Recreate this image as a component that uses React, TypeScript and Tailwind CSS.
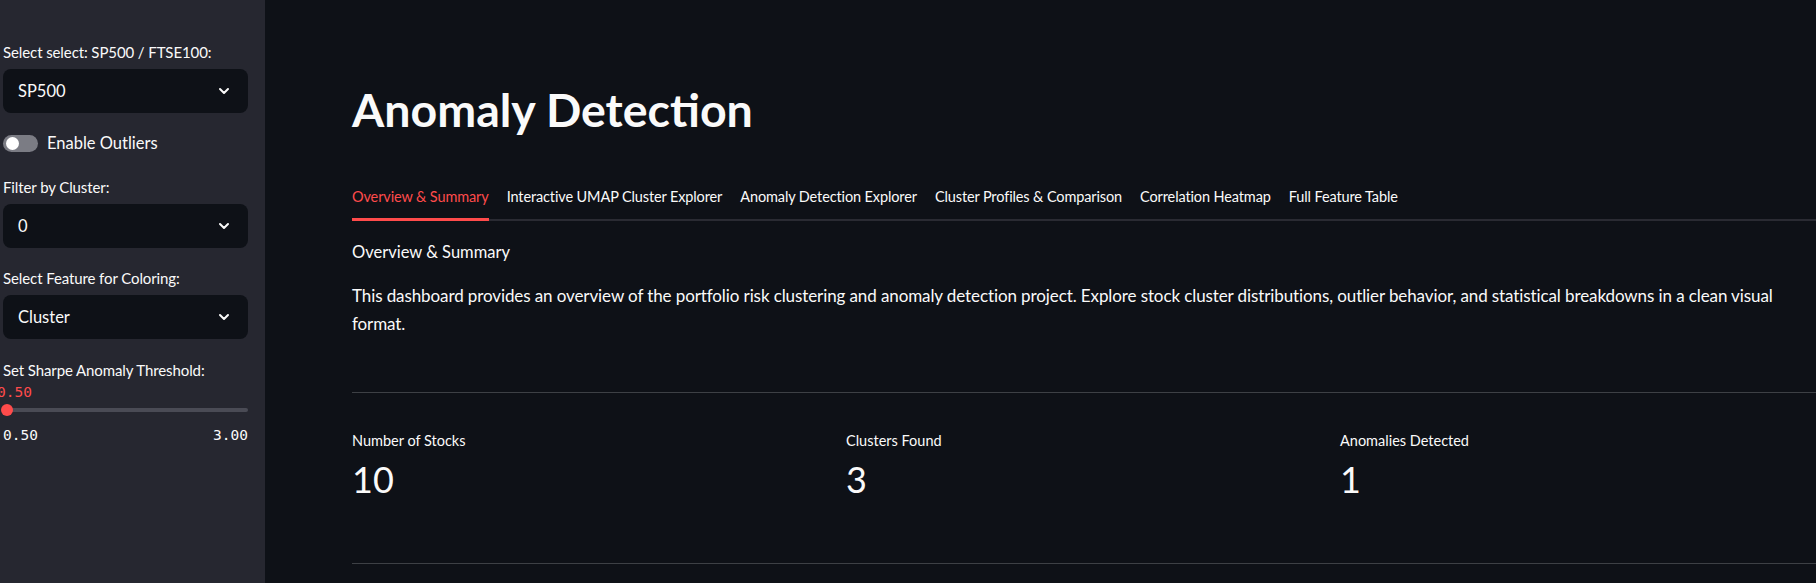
import { ChevronDown } from "lucide-react";

const tabs = [
  "Overview & Summary",
  "Interactive UMAP Cluster Explorer",
  "Anomaly Detection Explorer",
  "Cluster Profiles & Comparison",
  "Correlation Heatmap",
  "Full Feature Table",
];

const metrics = [
  { label: "Number of Stocks", value: "10" },
  { label: "Clusters Found", value: "3" },
  { label: "Anomalies Detected", value: "1" },
];

function SelectBox({ value }: { value: string }) {
  return (
    <div className="flex h-[44px] items-center justify-between rounded-[8px] bg-[#0e1117] pl-[15px] pr-[16px]">
      <span className="text-[16.5px] leading-[24px] text-[#fafafa]">{value}</span>
      <ChevronDown size={16} strokeWidth={3} className="text-[#fafafa]" />
    </div>
  );
}

function Label({ text, className }: { text: string; className?: string }) {
  return (
    <div
      className={
        "text-[15px] leading-[20px] tracking-[-0.1px] text-[#fafafa] " + (className ?? "")
      }
    >
      {text}
    </div>
  );
}

export default function App() {
  return (
    <div className="flex h-[583px] w-full overflow-hidden bg-[#0e1117] font-['Lato',sans-serif] text-[#fafafa]">
      <aside className="w-[265px] shrink-0 bg-[#262730]">
        <div className="w-[248px] pl-[3px]">
          <Label text="Select select: SP500 / FTSE100:" className="mt-[42px]" />
          <div className="mt-[7px]">
            <SelectBox value="SP500" />
          </div>

          <div className="mt-[18px] flex h-[24px] items-center gap-[9px]">
            <div className="flex h-[17px] w-[35px] items-center rounded-full bg-[#7b7c84] px-[3px]">
              <div className="h-[13px] w-[13px] rounded-full bg-white" />
            </div>
            <span className="text-[16.5px] leading-[24px]">Enable Outliers</span>
          </div>

          <Label text="Filter by Cluster:" className="mt-[22px]" />
          <div className="mt-[7px]">
            <SelectBox value="0" />
          </div>

          <Label text="Select Feature for Coloring:" className="mt-[20px]" />
          <div className="mt-[7px]">
            <SelectBox value="Cluster" />
          </div>

          <Label text="Set Sharpe Anomaly Threshold:" className="mt-[21px]" />
          <div className="mt-[3px] -ml-[6px] font-['DejaVu_Sans_Mono',monospace] text-[14.5px] leading-[18px] text-[#ff4b4b]">
            0.50
          </div>
          <div className="relative mt-[3px] flex h-[12px] items-center">
            <div className="h-[4px] w-full rounded-full bg-[#4a4b55]" />
            <div className="absolute -left-[2px] top-0 h-[12px] w-[12px] rounded-full bg-[#ff4b4b]" />
          </div>
          <div className="mt-[10px] flex justify-between font-['DejaVu_Sans_Mono',monospace] text-[14.5px] leading-[18px]">
            <span>0.50</span>
            <span>3.00</span>
          </div>
        </div>
      </aside>

      <main className="min-w-0 flex-1 overflow-hidden pl-[87px]">
        <div className="w-[1464px]">
          <h1 className="mt-[80px] text-[46.5px] font-bold leading-[58px]">Anomaly Detection</h1>

          <div className="mt-[49px] flex gap-[18px] border-b-2 border-[#2a2b33]">
            {tabs.map((tab, i) => (
              <div
                key={tab}
                className={
                  i === 0
                    ? "-mb-[2px] border-b-[3px] border-[#ff4b4b] pb-[11px] text-[14.5px] leading-[20px] tracking-[-0.12px] text-[#ff4b4b]"
                    : "-mb-[2px] border-b-[3px] border-transparent pb-[11px] text-[14.5px] leading-[20px] tracking-[-0.12px]"
                }
              >
                {tab}
              </div>
            ))}
          </div>

          <div className="mt-[19px] text-[16.5px] leading-[24px]">Overview &amp; Summary</div>
          <p className="mt-[18px] text-[17px] leading-[28px] tracking-[-0.1px]">
            This dashboard provides an overview of the portfolio risk clustering and anomaly detection
            project. Explore stock cluster distributions, outlier behavior, and statistical breakdowns
            in a clean visual format.
          </p>

          <hr className="mt-[54px] border-t border-[#3d4045]" />

          <div className="mt-[38px] grid grid-cols-3 gap-x-[18px]">
            {metrics.map((m) => (
              <div key={m.label}>
                <div className="text-[14.5px] leading-[20px]">{m.label}</div>
                <div className="mt-[6px] text-[36px] leading-[44px]">{m.value}</div>
              </div>
            ))}
          </div>

          <hr className="mt-[62px] border-t border-[#3d4045]" />
        </div>
      </main>
    </div>
  );
}
